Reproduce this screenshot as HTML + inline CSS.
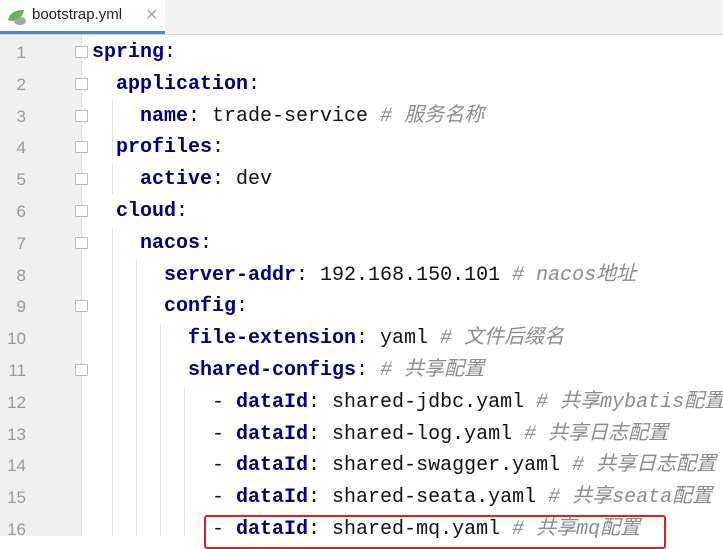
<!DOCTYPE html><html><head><meta charset="utf-8"><style>
body{margin:0;width:723px;height:536px;overflow:hidden;background:#fff;font-family:"Liberation Mono",monospace;position:relative}
.tabbar{position:absolute;left:0;top:0;width:723px;height:34px;background:#f2f2f2;border-bottom:1px solid #d8d8d8}
.tab{position:absolute;left:0;top:0;width:165px;height:31px;background:#fff;border-bottom:3px solid #4a88c7}
.tab span{position:absolute;left:32px;top:6px;font:15px "Liberation Sans",sans-serif;color:#222}
.tab .x{left:145px;color:#aaa;font-size:16px;top:5px}
.gut{position:absolute;left:0;top:35px;width:81px;height:501px;background:#f0f0f0;border-right:1px solid #e0e0e0}
.ln{position:absolute;left:0;width:26px;text-align:right;font-size:17px;color:#999;font-family:"Liberation Sans",sans-serif}
.l{position:absolute;left:92px;font-size:20px;white-space:pre;color:#111;line-height:24px}
.k{color:#000080;font-weight:bold}
.c{color:#8c8c8c;font-style:italic;font-family:"Liberation Mono","Noto Sans CJK SC",monospace}
.g{position:absolute;width:1px;background:#e2e2e2}
.f{position:absolute;left:75px;width:11px;height:10px;border:1px solid #bbb;background:#fff;border-radius:1px}
</style></head><body>
<div class="tabbar"><div class="tab">
<svg style="position:absolute;left:6px;top:8px" width="22" height="18"><path d="M2 12 Q4 2 18 2 Q16 12 6 13 Z" fill="#6db33f"/><ellipse cx="14" cy="13" rx="6" ry="4" fill="#9aa7b0"/></svg>
<span>bootstrap.yml</span><span class="x">✕</span></div></div>
<div class="gut"></div>
<div class="g" style="left:112px;top:100px;height:60px"></div>
<div class="g" style="left:112px;top:164px;height:30px"></div>
<div class="g" style="left:112px;top:228px;height:308px"></div>
<div class="g" style="left:136px;top:260px;height:276px"></div>
<div class="g" style="left:160px;top:324px;height:212px"></div>
<div class="g" style="left:184px;top:388px;height:148px"></div>
<div id="c"></div>
<div style="position:absolute;left:204px;top:515px;width:458px;height:30px;border:2px solid #e02020;border-radius:3px"></div>
<script>
var L=[
['<span class="k">spring</span>:',0,1],
['  <span class="k">application</span>:',0,1],
['    <span class="k">name</span>: trade-service <span class="c"># 服务名称</span>',0,2],
['  <span class="k">profiles</span>:',0,1],
['    <span class="k">active</span>: dev',0,2],
['  <span class="k">cloud</span>:',0,1],
['    <span class="k">nacos</span>:',0,1],
['      <span class="k">server-addr</span>: 192.168.150.101 <span class="c"># nacos地址</span>',0,0],
['      <span class="k">config</span>:',0,1],
['        <span class="k">file-extension</span>: yaml <span class="c"># 文件后缀名</span>',0,0],
['        <span class="k">shared-configs</span>: <span class="c"># 共享配置</span>',0,1],
['          - <span class="k">dataId</span>: shared-jdbc.yaml <span class="c"># 共享mybatis配置</span>',0,0],
['          - <span class="k">dataId</span>: shared-log.yaml <span class="c"># 共享日志配置</span>',0,0],
['          - <span class="k">dataId</span>: shared-swagger.yaml <span class="c"># 共享日志配置</span>',0,0],
['          - <span class="k">dataId</span>: shared-seata.yaml <span class="c"># 共享seata配置</span>',0,0],
['          - <span class="k">dataId</span>: shared-mq.yaml <span class="c"># 共享mq配置</span>',0,0]];
var h='';for(var i=0;i<L.length;i++){var y=52+i*31.8;
h+='<div class="ln" style="top:'+(y-9)+'px">'+(i+1)+'</div>';
if(L[i][2])h+='<div class="f" style="top:'+(y-6)+'px"></div>';
h+='<div class="l" style="top:'+(y-11)+'px">'+L[i][0]+'</div>';}
document.getElementById('c').innerHTML=h;
</script></body></html>
